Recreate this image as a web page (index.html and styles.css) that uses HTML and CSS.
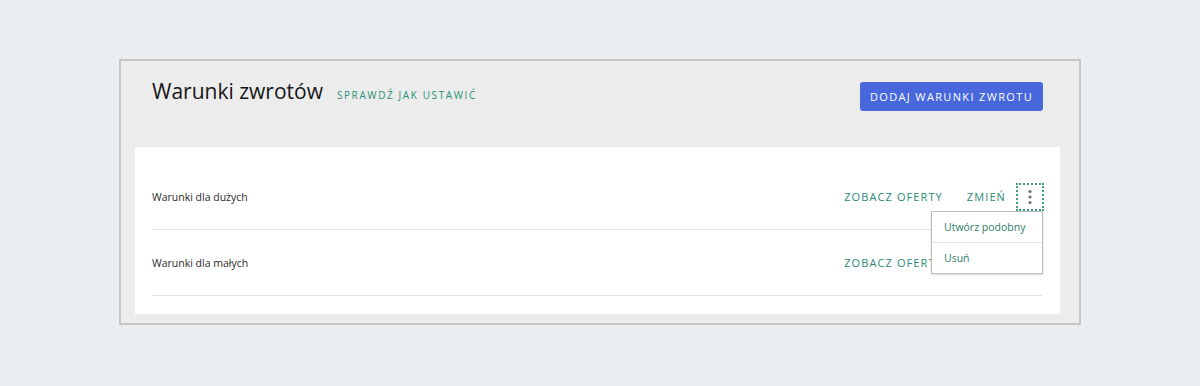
FILE: index.html
```html
<!DOCTYPE html>
<html lang="pl">
<head>
  <meta charset="UTF-8">
  <title>Warunki zwrotów</title>
  <link rel="stylesheet" href="styles.css">
</head>
<body>
  <div class="frame">
    <div class="header">
      <div class="title-group">
        <h1>Warunki zwrotów</h1>
        <a class="help-link" href="#">Sprawdź jak ustawić</a>
      </div>
      <button class="add-button" type="button">Dodaj warunki zwrotu</button>
    </div>
    <div class="card">
      <div class="row">
        <span class="row-name">Warunki dla dużych</span>
        <div class="actions">
          <a class="action" href="#">Zobacz oferty</a>
          <a class="action" href="#">Zmień</a>
          <div class="more-wrap">
            <button class="more" type="button" aria-label="Więcej">
              <svg width="4" height="16" viewBox="0 0 4 16"><circle cx="2" cy="2.5" r="1.6"/><circle cx="2" cy="8" r="1.6"/><circle cx="2" cy="13.5" r="1.6"/></svg>
            </button>
            <ul class="menu">
              <li>Utwórz podobny</li>
              <li>Usuń</li>
            </ul>
          </div>
        </div>
      </div>
      <div class="row">
        <span class="row-name">Warunki dla małych</span>
        <div class="actions">
          <a class="action" href="#">Zobacz oferty</a>
          <a class="action" href="#">Zmień</a>
          <div class="more-wrap">
            <button class="more plain" type="button" aria-label="Więcej">
              <svg width="4" height="16" viewBox="0 0 4 16"><circle cx="2" cy="2.5" r="1.6"/><circle cx="2" cy="8" r="1.6"/><circle cx="2" cy="13.5" r="1.6"/></svg>
            </button>
          </div>
        </div>
      </div>
    </div>
  </div>
</body>
</html>
```

FILE: styles.css
```css
body {
  font-family: "Open Sans", Arial, sans-serif;
  background-color: #ebeef1;
  margin: 0;
  padding: 59px 0 0 119px;
}
.frame {
  box-sizing: border-box;
  width: 962px;
  height: 266px;
  border: 2px solid #c6c6c6;
  background: #ececec;
  padding: 0 19px 0 14px;
}
.header {
  display: flex;
  justify-content: space-between;
  align-items: flex-start;
  height: 86px;
  padding: 0 17px;
}
.title-group {
  display: flex;
  align-items: baseline;
  padding-top: 16px;
}
h1 {
  margin: 0;
  font-size: 21px;
  font-weight: 400;
  color: #161616;
}
.help-link {
  margin-left: 14px;
  font-size: 10px;
  letter-spacing: 1.6px;
  color: #2a8f77;
  text-decoration: none;
  text-transform: uppercase;
}
.add-button {
  margin-top: 21px;
  width: 183px;
  height: 29px;
  border: none;
  border-radius: 3px;
  background: #4867dd;
  color: #fff;
  font-family: inherit;
  font-size: 11px;
  letter-spacing: 1.35px;
  white-space: nowrap;
  text-transform: uppercase;
  cursor: pointer;
}
.card {
  background: #fff;
  padding: 17px 18px 18px 17px;
}
.row {
  display: flex;
  justify-content: space-between;
  align-items: center;
  height: 65px;
  border-bottom: 1px solid #e2e2e2;
}
.row-name {
  font-size: 10.5px;
  color: #2b2b2b;
}
.actions {
  display: flex;
  align-items: center;
}
.action {
  font-size: 11px;
  letter-spacing: 1.1px;
  color: #2a8a74;
  text-decoration: none;
  text-transform: uppercase;
  margin-right: 24px;
}
.action + .action {
  margin-right: 10px;
}
.more-wrap {
  position: relative;
}
.more {
  display: flex;
  align-items: center;
  justify-content: center;
  width: 28px;
  height: 28px;
  padding: 0;
  margin-right: -2px;
  background: none;
  border: 2px dotted #3f9d86;
  cursor: pointer;
}
.more.plain {
  border-color: transparent;
}
.more svg {
  fill: #6f6f6f;
}
.menu {
  position: absolute;
  top: 28px;
  right: -1px;
  width: 110px;
  margin: 0;
  padding: 0;
  list-style: none;
  background: #fff;
  border: 1px solid #bdbdbd;
  box-shadow: 0 1px 2px rgba(0, 0, 0, 0.15);
  z-index: 2;
}
.menu li {
  height: 30px;
  line-height: 30px;
  padding-left: 12px;
  font-size: 10.5px;
  color: #2f7d6b;
}
.menu li + li {
  border-top: 1px solid #e4e4e4;
}
```
